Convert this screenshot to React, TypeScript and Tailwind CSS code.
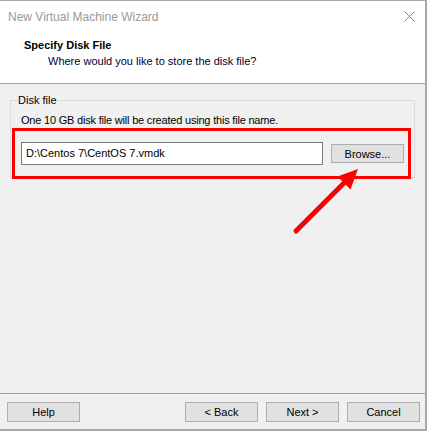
export default function App() {
  const font = { fontFamily: '"Liberation Sans", Arial, sans-serif' };
  return (
    <div className="h-[431px] w-[430px] overflow-hidden bg-white" style={font}>
      <div className="relative flex h-[431px] w-[427px] flex-col border-t border-r-2 border-b-2 border-t-[#aaaaaa] border-r-[#a8a8a8] border-b-[#a8a8a8] text-[11px] text-black">
        {/* title bar */}
        <div className="flex h-[32px] shrink-0 items-center justify-between bg-white pl-[8px] pr-[10px]">
          <span className="text-[12px] text-[#999999]">New Virtual Machine Wizard</span>
          <svg width="11" height="11" viewBox="0 0 11 11" className="mt-[-1px]">
            <path d="M0.5 0.5 L10.5 10.5 M10.5 0.5 L0.5 10.5" stroke="#888888" strokeWidth="1" />
          </svg>
        </div>

        {/* header */}
        <div className="h-[51px] shrink-0 border-b border-[#a0a0a0] bg-white pl-[24px] pt-[4px]">
          <div className="text-[11px] font-bold leading-[16px]">Specify Disk File</div>
          <div className="pl-[24px] text-[11px] leading-[16px] text-[#000033]">Where would you like to store the disk file?</div>
        </div>

        {/* body */}
        <div className="flex-1 bg-[#f0f0f0] pt-[16px]">
          <div className="relative mx-[10px] h-[78px] border border-[#dcdcdc] pl-[10px] pt-[11px]">
            <span className="absolute left-[6px] top-[-9px] bg-[#f0f0f0] px-[1px] leading-[16px]">Disk file</span>
            <div className="leading-[16px] tracking-[-0.2px]">One 10 GB disk file will be created using this file name.</div>
            <div className="mt-[14px] flex items-center gap-[8px]">
              <div className="flex h-[23px] w-[302px] items-center border border-[#7a7a7a] bg-white pl-[4px]">
                D:\Centos 7\CentOS 7.vmdk
              </div>
              <button className="h-[19px] w-[73px] border border-[#adadad] bg-[#e1e1e1] leading-[16px]">Browse...</button>
            </div>
          </div>
        </div>

        {/* footer */}
        <div className="flex h-[36px] shrink-0 items-start justify-between border-t border-[#a0a0a0] bg-[#f0f0f0] pl-[7px] pr-[5px] pt-[8px]">
          <button className="h-[20px] w-[73px] border border-[#adadad] bg-[#e1e1e1]">Help</button>
          <div className="flex gap-[8px]">
            <button className="h-[20px] w-[73px] border border-[#adadad] bg-[#e1e1e1]">&lt; Back</button>
            <button className="h-[20px] w-[73px] border border-[#adadad] bg-[#e1e1e1]">Next &gt;</button>
            <button className="h-[20px] w-[73px] border border-[#adadad] bg-[#e1e1e1]">Cancel</button>
          </div>
        </div>

        {/* red annotation */}
        <div className="absolute left-[12px] top-[127px] h-[51px] w-[399px] border-[3px] border-[#ff0000]" />
        <svg className="absolute left-0 top-0" width="427" height="431" viewBox="0 0 427 431">
          <line x1="296" y1="230" x2="346" y2="180" stroke="#ff0000" strokeWidth="5" strokeLinecap="round" />
          <polygon points="358,168 350.5,188.5 337.5,175.5" fill="#ff0000" />
        </svg>
      </div>
    </div>
  );
}
